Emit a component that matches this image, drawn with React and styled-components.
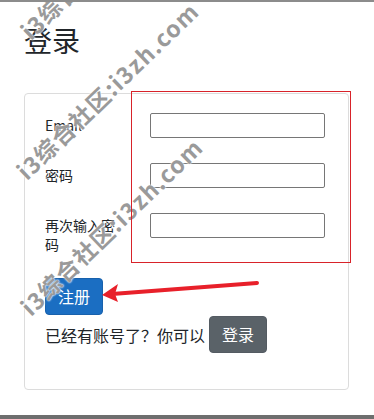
import React from "react";
import styled, { createGlobalStyle } from "styled-components";

const GlobalStyle = createGlobalStyle`
    html, body {
        margin: 0;
        padding: 0;
        background: #fff;
    }
    body {
        font-family: "Noto Sans CJK SC", "Noto Sans", sans-serif;
        color: #212529;
    }
`;

const Page = styled.div`
    position: relative;
    box-sizing: border-box;
    width: 374px;
    height: 419px;
    overflow: hidden;
    border-top: 2px solid #8c8c8c;
    border-bottom: 4px solid #6e6e6e;
    padding: 21px 25px 0 24px;
`;

const Title = styled.h3`
    margin: 0 0 36px 0;
    font-size: 28px;
    font-weight: 400;
    line-height: 34px;
`;

const Card = styled.div`
    box-sizing: border-box;
    height: 297px;
    border: 1px solid #dcdcdc;
    border-radius: 4px;
    padding: 19px 20px;
`;

const Rows = styled.div`
    display: flex;
    flex-direction: column;
    gap: 25px;
`;

const Row = styled.div`
    display: grid;
    grid-template-columns: 80px 175px;
    column-gap: 25px;
    align-items: start;
`;

const Label = styled.label`
    font-size: 14px;
    line-height: 19px;
    padding-top: 3px;
`;

const Input = styled.input`
    box-sizing: border-box;
    width: 175px;
    height: 25px;
    border: 1px solid #767676;
    border-radius: 2px;
    margin: 0;
    padding: 1px 4px;
    outline: none;
`;

const Button = styled.button`
    font-family: inherit;
    font-size: 16px;
    line-height: 23px;
    padding: 6px 12px;
    border-radius: 4px;
    color: #fff;
    cursor: pointer;
    background: ${(p) => (p.$variant === "secondary" ? "#5a6268" : "#1b6ec2")};
    border: 1px solid ${(p) => (p.$variant === "secondary" ? "#545b62" : "#1861ac")};
`;

const SubmitWrap = styled.div`
    margin-top: 24px;
`;

const LoginLine = styled.div`
    display: flex;
    align-items: center;
    gap: 4px;
    margin-top: 1px;
    font-size: 16px;
`;

const Annotation = styled.div`
    position: absolute;
    left: 131px;
    top: 89px;
    width: 220px;
    height: 172px;
    box-sizing: border-box;
    border: 1px solid #d8232a;
    pointer-events: none;
`;

const Arrow = styled.svg`
    position: absolute;
    left: 0;
    top: 0;
    pointer-events: none;
`;

const Watermark = styled.span`
    position: absolute;
    left: ${(p) => p.$x}px;
    top: ${(p) => p.$y}px;
    transform-origin: 0 50%;
    transform: rotate(-44deg);
    white-space: nowrap;
    font-family: "Noto Sans CJK SC", "Liberation Sans", sans-serif;
    font-weight: 700;
    font-size: 23px;
    line-height: 24px;
    letter-spacing: 1.3px;
    color: #9a9a9a;
    text-shadow: 0 0 2px #fff, 0 0 2px #fff;
    pointer-events: none;
`;

const marks = [
    { x: 24, y: 20 },
    { x: 20, y: 160 },
    { x: 24, y: 296 },
];

export default function App() {
    return (
        <>
            <GlobalStyle />
            <Page>
                <Title>登录</Title>
                <Card>
                    <Rows>
                        <Row>
                            <Label>Email</Label>
                            <Input type="email" />
                        </Row>
                        <Row>
                            <Label>密码</Label>
                            <Input type="password" />
                        </Row>
                        <Row>
                            <Label>再次输入密码</Label>
                            <Input type="password" />
                        </Row>
                    </Rows>
                    <SubmitWrap>
                        <Button>注册</Button>
                    </SubmitWrap>
                    <LoginLine>
                        已经有账号了？你可以
                        <Button $variant="secondary">登录</Button>
                    </LoginLine>
                </Card>

                {marks.map((m, i) => (
                    <Watermark key={i} $x={m.x} $y={m.y}>
                        i3综合社区:i3zh.com
                    </Watermark>
                ))}

                <Annotation />
                <Arrow width="374" height="419" viewBox="0 0 374 419">
                    <line x1="257" y1="281" x2="112" y2="292" stroke="#e8202a" strokeWidth="4" strokeLinecap="round" />
                    <polygon points="102,293 118,282 115,292 118,300" fill="#e8202a" />
                </Arrow>
            </Page>
        </>
    );
}
